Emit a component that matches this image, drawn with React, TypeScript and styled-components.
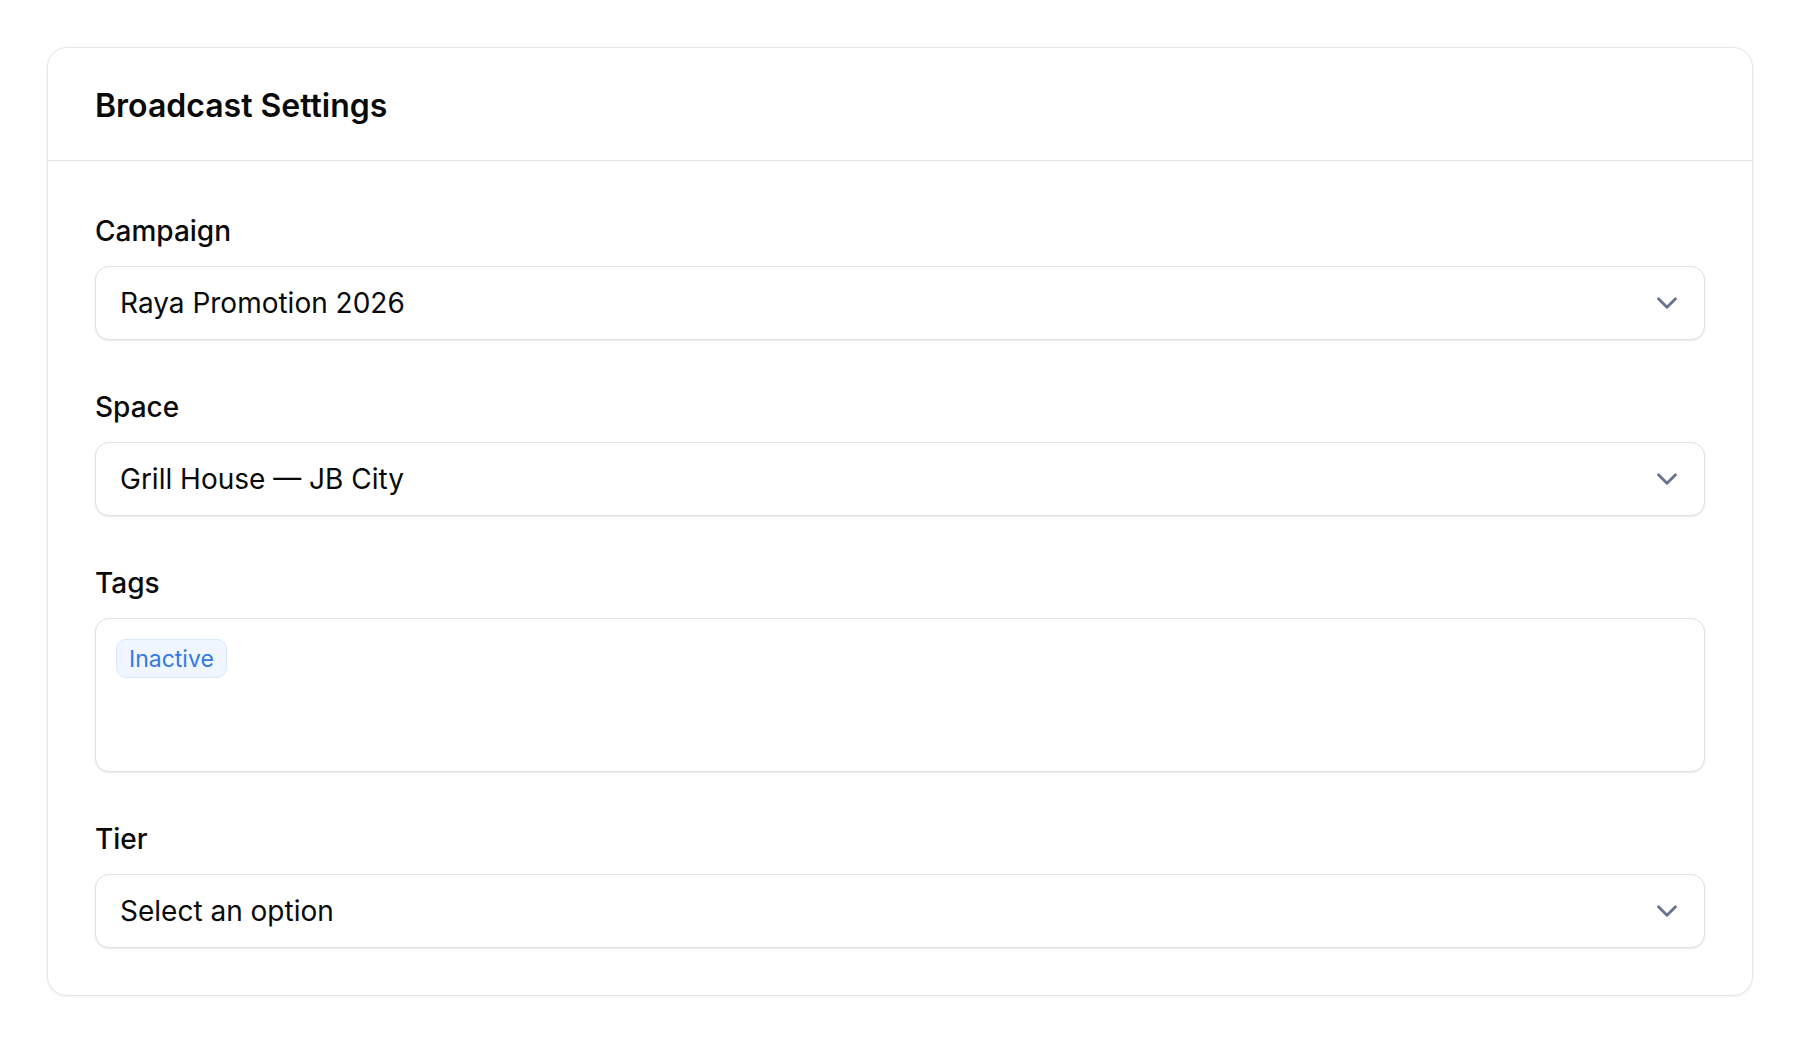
import styled, { createGlobalStyle } from 'styled-components'
import { ChevronDown } from 'lucide-react'

const GlobalStyle = createGlobalStyle`
    html, body {
        margin: 0;
        padding: 0;
        background: #ffffff;
    }
    body {
        font-family: Inter, "Noto Sans", "Liberation Sans", sans-serif;
        color: #0a0a0a;
        -webkit-font-smoothing: antialiased;
    }
    * {
        box-sizing: border-box;
    }
`

interface Field {
    label: string
    value: string
}

const selects: Field[] = [
    { label: 'Campaign', value: 'Raya Promotion 2026' },
    { label: 'Space', value: 'Grill House — JB City' },
]

export default function App() {
    return (
        <>
            <GlobalStyle />
            <Page>
                <Card>
                    <Header>
                        <Title>Broadcast Settings</Title>
                    </Header>
                    <Body>
                        {selects.map((f) => (
                            <FieldGroup key={f.label}>
                                <Label>{f.label}</Label>
                                <Select>
                                    <span>{f.value}</span>
                                    <ChevronDown size={34} strokeWidth={2} color="#64748b" />
                                </Select>
                            </FieldGroup>
                        ))}
                        <FieldGroup>
                            <Label>Tags</Label>
                            <TagBox>
                                <Tag>Inactive</Tag>
                            </TagBox>
                        </FieldGroup>
                        <FieldGroup>
                            <Label>Tier</Label>
                            <Select>
                                <span>Select an option</span>
                                <ChevronDown size={34} strokeWidth={2} color="#64748b" />
                            </Select>
                        </FieldGroup>
                    </Body>
                </Card>
            </Page>
        </>
    )
}

const Page = styled.div`
    padding: 47px 47px 47px;
`

const Card = styled.div`
    background: #fff;
    border: 1px solid #e6e6e6;
    border-radius: 20px;
    box-shadow: 0 1px 3px rgba(0, 0, 0, 0.06);
`

const Header = styled.div`
    height: 113px;
    padding: 3px 47px 0;
    display: flex;
    align-items: center;
    border-bottom: 1px solid #e4e4e4;
`

const Title = styled.h2`
    margin: 0;
    font-size: 32px;
    line-height: 38px;
    font-weight: 600;
    color: #0a0a0a;
`

const Body = styled.div`
    padding: 53px 47px 47px;
    display: flex;
    flex-direction: column;
    gap: 50px;
`

const FieldGroup = styled.div`
    display: flex;
    flex-direction: column;
    gap: 18px;
`

const Label = styled.label`
    font-size: 28px;
    line-height: 34px;
    font-weight: 500;
    color: #0a0a0a;
`

const Select = styled.div`
    height: 74px;
    display: flex;
    align-items: center;
    justify-content: space-between;
    padding: 0 20px 0 24px;
    border: 1px solid #e2e2e2;
    border-radius: 14px;
    background: #fff;
    box-shadow: 0 1px 2px rgba(0, 0, 0, 0.1);
    font-size: 28px;
    color: #0a0a0a;
`

const TagBox = styled.div`
    height: 154px;
    padding: 20px;
    display: flex;
    flex-wrap: wrap;
    align-items: flex-start;
    gap: 10px;
    border: 1px solid #e2e2e2;
    border-radius: 14px;
    background: #fff;
    box-shadow: 0 1px 2px rgba(0, 0, 0, 0.1);
`

const Tag = styled.span`
    display: inline-flex;
    align-items: center;
    height: 39px;
    padding: 0 12px;
    border: 1px solid #d9e7fd;
    border-radius: 10px;
    background: #eff6ff;
    color: #3478e6;
    font-size: 23px;
    font-weight: 400;
`
